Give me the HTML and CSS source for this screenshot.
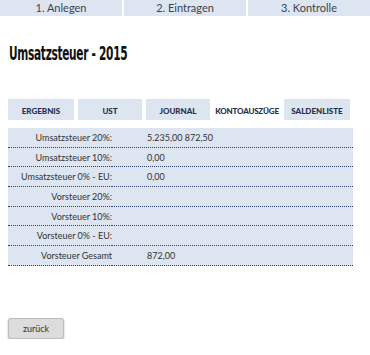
FILE: index.html
```html
<!DOCTYPE html>
<html lang="de">
<head>
  <meta charset="UTF-8" />
  <title>Umsatzsteuer - 2015</title>
  <link rel="stylesheet" href="styles.css">
</head>
<body>

<nav class="steps">
  <a href="#">1. Anlegen</a>
  <a href="#">2. Eintragen</a>
  <a href="#">3. Kontrolle</a>
</nav>

<main>
  <h1><span>Umsatzsteuer - 2015</span></h1>

  <div class="tabs">
    <a href="#" class="tab">Ergebnis</a>
    <a href="#" class="tab">USt</a>
    <a href="#" class="tab">Journal</a>
    <a href="#" class="tab active">Kontoauszüge</a>
    <a href="#" class="tab">Saldenliste</a>
  </div>

  <table class="result">
    <tr><td class="label">Umsatzsteuer 20%:</td><td class="value">5.235,00 872,50</td></tr>
    <tr><td class="label">Umsatzsteuer 10%:</td><td class="value">0,00</td></tr>
    <tr><td class="label">Umsatzsteuer 0% - EU:</td><td class="value">0,00</td></tr>
    <tr><td class="label">Vorsteuer 20%:</td><td class="value"></td></tr>
    <tr><td class="label">Vorsteuer 10%:</td><td class="value"></td></tr>
    <tr><td class="label">Vorsteuer 0% - EU:</td><td class="value"></td></tr>
    <tr><td class="label">Vorsteuer Gesamt</td><td class="value">872,00</td></tr>
  </table>

  <button type="button" class="back">zurück</button>
</main>

</body>
</html>
```

FILE: styles.css
```css
    body {
      font-family: Lato, Arial, sans-serif;
      margin: 0; padding: 0;
      background: white;
      color: #333;
      font-size: 9px;
    }
    .steps {
      display: flex;
      gap: 2px;
      height: 16px;
    }
    .steps a {
      flex: 1;
      background: #dde5f1;
      color: #3a4350;
      text-decoration: none;
      text-align: center;
      font-size: 11px;
      line-height: 16px;
    }
    main {
      padding: 0 8px;
    }
    h1 {
      font-family: "DejaVu Sans", sans-serif;
      font-stretch: condensed;
      font-weight: bold;
      font-size: 19px;
      color: #111;
      margin: 26px 0 0 1px;
      line-height: 22px;
    }
    h1 span {
      display: inline-block;
      transform: scaleX(0.62);
      transform-origin: left center;
      letter-spacing: -0.5px;
    }
    .tabs {
      display: flex;
      gap: 4px;
      margin-top: 35px;
    }
    .tab {
      height: 21px;
      line-height: 25px;
      background: #dde5f1;
      color: #1f2f4f;
      font-weight: 900;
      font-size: 8px;
      text-transform: uppercase;
      text-decoration: none;
      text-align: center;
      white-space: nowrap;
      width: 66px;
    }
    .tab:nth-child(2) { width: 64px; }
    .tab:nth-child(3) { width: 64px; }
    .tab.active {
      background: white;
      width: 66px;
      letter-spacing: -0.2px;
    }
    .result {
      margin-top: 8px;
      width: 345px;
      border-collapse: collapse;
      background: #dde5f1;
    }
    .result td {
      height: 18.7px;
      padding: 0;
      border-bottom: 1px dotted #2f3f70;
      color: #333;
      font-size: 9px;
    }
    .result .label {
      width: 104px;
      text-align: right;
    }
    .result .value {
      padding-left: 35px;
    }
    .back {
      margin-top: 52px;
      width: 56px;
      height: 21px;
      background: #dcdcdc;
      border: 1px solid #bbb;
      border-radius: 3px;
      box-shadow: 0 1px 2px rgba(0,0,0,0.3);
      font-family: Lato, Arial, sans-serif;
      font-size: 9px;
      color: #333;
      cursor: pointer;
    }
```
